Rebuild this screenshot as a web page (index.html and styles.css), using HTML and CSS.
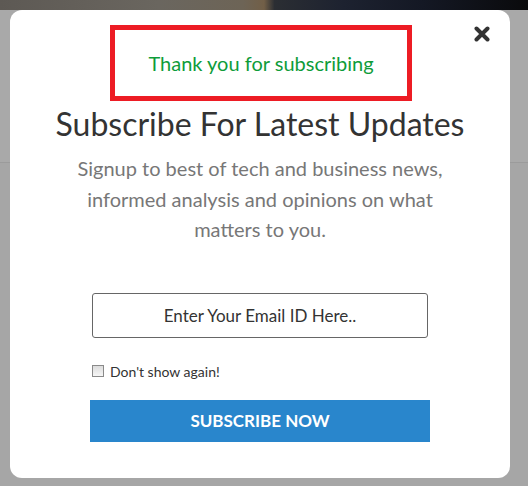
FILE: index.html
```html
<!DOCTYPE html>
<html lang="en">
<head>
<meta charset="utf-8">
<title>Subscribe</title>
<link rel="stylesheet" href="styles.css">
</head>
<body>
<div class="page">
  <div class="photo-strip"></div>
  <div class="page-header"></div>
  <div class="page-body"></div>
</div>
<div class="modal">
  <button class="close" aria-label="Close">
    <svg width="16" height="16" viewBox="0 0 16 16"><path d="M2.5 2.5 L13.5 13.5 M13.5 2.5 L2.5 13.5" stroke="#333" stroke-width="4" stroke-linecap="round"/></svg>
  </button>
  <div class="notice">Thank you for subscribing</div>
  <h1 class="title">Subscribe For Latest Updates</h1>
  <p class="lead">Signup to best of tech and business news, informed analysis and opinions on what matters to you.</p>
  <form class="form">
    <input class="email" type="text" placeholder="Enter Your Email ID Here..">
    <label class="dont-show"><input type="checkbox" class="check"><span>Don't show again!</span></label>
    <button type="button" class="submit">SUBSCRIBE NOW</button>
  </form>
</div>
</body>
</html>
```
FILE: styles.css
```css
html, body {
  margin: 0;
  padding: 0;
}
body {
  width: 528px;
  height: 486px;
  overflow: hidden;
  background: #a6a6a6;
  font-family: Lato, "Open Sans", sans-serif;
  position: relative;
}
.page-header {
  height: 152px;
  background: #a9a9a9;
  border-bottom: 1px solid #9b9b9b;
}
.photo-strip {
  height: 10px;
  background: linear-gradient(90deg, #5d5954 0%, #6a665f 30%, #6d6456 46%, #725f47 50%, #2b2e33 52%, #1d2230 65%, #141824 80%, #0a0a0c 100%);
}
.modal {
  position: absolute;
  left: 10px;
  top: 10px;
  width: 500px;
  height: 468px;
  background: #fff;
  border-radius: 12px;
  display: flex;
  flex-direction: column;
  align-items: center;
  box-sizing: border-box;
}
.close {
  position: absolute;
  left: 464px;
  top: 16px;
  width: 16px;
  height: 16px;
  padding: 0;
  border: 0;
  background: none;
  display: block;
}
.close svg {
  display: block;
}
.notice {
  margin: 15px 0 0 2px;
  width: 302px;
  height: 76px;
  box-sizing: border-box;
  border: 5px solid #ed1c24;
  color: #0e9c3a;
  font-size: 20px;
  display: flex;
  align-items: center;
  justify-content: center;
}
.title {
  margin: 4px 0 0;
  font-size: 32px;
  font-weight: normal;
  color: #333;
  line-height: 38px;
}
.lead {
  margin: 10px 0 0;
  width: 380px;
  text-align: center;
  font-size: 20px;
  line-height: 30.5px;
  color: #777;
}
.form {
  display: flex;
  flex-direction: column;
  align-items: flex-start;
  width: 340px;
  margin-top: 48px;
}
.email {
  margin-left: 2px;
  width: 336px;
  height: 45px;
  box-sizing: border-box;
  border: 1px solid #666;
  border-radius: 3px;
  text-align: center;
  font-family: inherit;
  font-size: 17px;
  color: #333;
  outline: none;
}
.email::placeholder {
  color: #333;
  opacity: 1;
}
.dont-show {
  margin: 25px 0 0 2px;
  display: flex;
  align-items: center;
  gap: 6px;
  font-size: 14px;
  color: #333;
}
.check {
  appearance: none;
  margin: 0;
  width: 12px;
  height: 12px;
  border: 1px solid #8a8a8a;
  background: linear-gradient(#dcdcdc, #f6f6f6);
}
.submit {
  margin-top: 20px;
  width: 340px;
  height: 42px;
  border: 0;
  background: #2986cc;
  color: #fff;
  font-family: inherit;
  font-size: 17px;
  font-weight: bold;
}
```
